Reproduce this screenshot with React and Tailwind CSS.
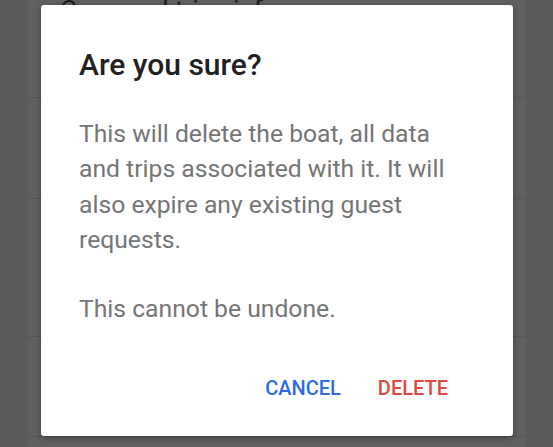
export default function App() {
  return (
    <div className="relative h-[447px] w-[553px] overflow-hidden bg-[#5a5a5a] font-['Roboto',sans-serif]">
      {/* dimmed page underneath */}
      <div className="ml-[28px] flex h-full w-[497px] flex-col bg-[#606060]">
        <div className="h-[98px] border-b border-[#565656]">
          <div className="-mt-[4px] pl-[32px] text-[26px] leading-[28px] text-[#1c1c1c]">Crew and trips info</div>
        </div>
        <div className="h-[101px] border-b border-[#565656]" />
        <div className="h-[138px] border-b border-[#565656]" />
        <div className="h-[100px] border-b border-[#565656]" />
      </div>

      {/* dialog */}
      <div className="absolute left-[41px] top-[5px] flex h-[431px] w-[472px] flex-col rounded-[3px] bg-white pl-[38px] shadow-[0_2px_6px_rgba(0,0,0,0.35)]">
        <h2 className="pt-[40px] text-[30px] font-medium leading-[40px] text-[#212121]">Are you sure?</h2>
        <div className="mt-[31px] pr-[54px] text-[24.7px] leading-[35.3px] text-[#757575]">
          <p>This will delete the boat, all data and trips associated with it. It will also expire any existing guest requests.</p>
          <p className="mt-[34px]">This cannot be undone.</p>
        </div>
        <div className="mt-auto mb-[36px] flex justify-end gap-[37px] pr-[65px]">
          <button type="button" className="text-[20px] font-medium leading-[24px] text-[#2c6ae6]">CANCEL</button>
          <button type="button" className="text-[20px] font-medium leading-[24px] text-[#e0483d]">DELETE</button>
        </div>
      </div>
    </div>
  );
}
